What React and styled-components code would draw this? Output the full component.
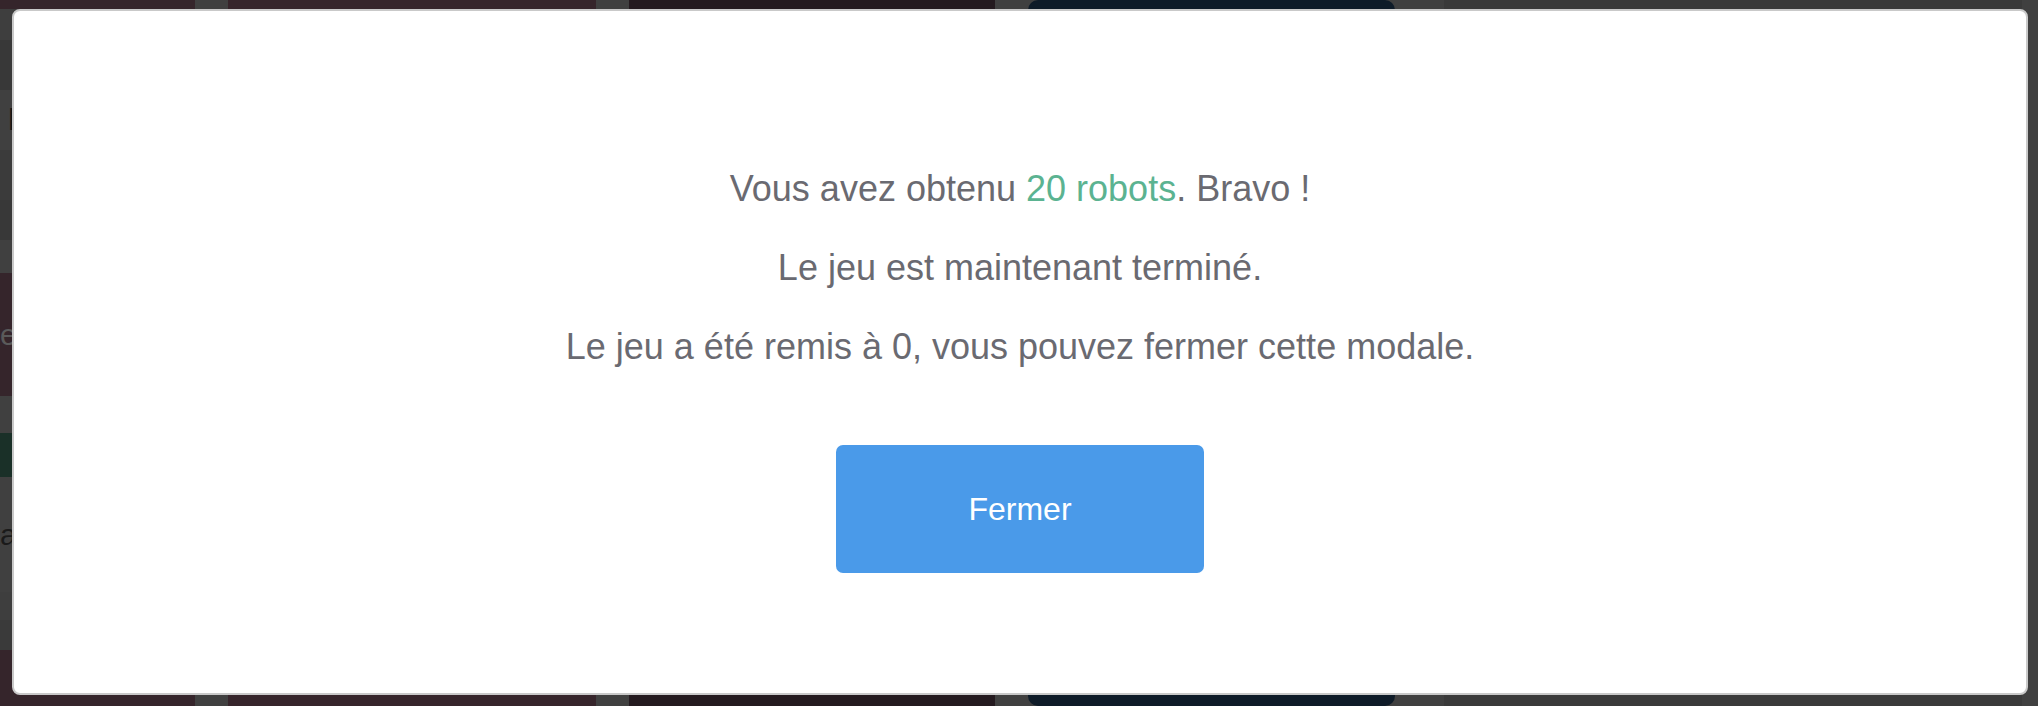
import React from 'react'
import styled, { createGlobalStyle } from 'styled-components'

const GlobalStyle = createGlobalStyle`
  html, body {
    margin: 0;
    padding: 0;
    height: 706px;
    overflow: hidden;
    background-color: #404040;
    font-family: "Liberation Sans", Arial, Helvetica, sans-serif;
  }
`

const Board = styled.div`
  display: grid;
  grid-template-columns: 195px 368px 366px 367px 594px;
  column-gap: 33px;
  height: 706px;
  width: 2038px;

  & > :last-child {
    margin-left: 16px;
  }
`

const Column = styled.div`
  display: flex;
  flex-direction: column;
  background-color: ${props => props.bg};
  border-radius: ${props => props.rounded ? '10px' : '0'};
  overflow: hidden;
`

const Band = styled.div`
  height: ${props => props.h}px;
  flex: ${props => props.grow ? 1 : 'none'};
  background-color: ${props => props.bg};
  color: ${props => props.ink || 'transparent'};
  font-size: 30px;
  line-height: ${props => props.h}px;
  text-align: right;
  padding-right: 180px;
`

const Panel = styled.div`
  display: flex;
  flex-direction: column;
  gap: 25px;
  padding-top: 12px;
  background-color: #3a3a3a;
`

const PanelCard = styled.div`
  height: 54px;
  background-color: ${props => props.bg};
`

const Overlay = styled.div`
  position: fixed;
  top: 9px;
  left: 12px;
  right: 10px;
  bottom: 11px;
  display: flex;
  flex-direction: column;
  align-items: center;
  padding: 156px 0 0;
  box-sizing: border-box;
  background-color: #fff;
  border: 2px solid #c9c9c9;
  border-radius: 8px;
`

const Message = styled.p`
  margin: 0 0 36px;
  font-size: 36px;
  line-height: 43px;
  color: #6a6a71;
  text-align: center;
`

const Highlight = styled.span`
  color: #5bb391;
`

const CloseButton = styled.button`
  margin-top: 41px;
  width: 368px;
  height: 128px;
  border: none;
  border-radius: 7px;
  background-color: #4a9ae9;
  color: #fff;
  font-family: inherit;
  font-size: 32px;
  cursor: pointer;
`

export default function App() {
  return (
    <>
      <GlobalStyle />
      <Board>
        <Column bg="#3a3a3a">
          <Band h={9} bg="#35252b" />
          <Band h={31} bg="#3e3e3e" />
          <Band h={50} bg="#383838" />
          <Band h={60} bg="#404040" ink="#151515">l</Band>
          <Band h={50} bg="#3b3b3b" />
          <Band h={40} bg="#383838" />
          <Band h={33} bg="#404040" />
          <Band h={123} bg="#35252b" ink="#5a5a5a">e</Band>
          <Band h={37} bg="#404040" />
          <Band h={44} bg="#1a3028" />
          <Band h={115} bg="#404040" ink="#1a1a1a">a</Band>
          <Band h={28} bg="#3e3e3e" />
          <Band h={30} bg="#3a3a3a" />
          <Band grow bg="#35252b" />
        </Column>
        <Column bg="#36252b" />
        <Column bg="#241a1f" />
        <Column bg="#0e1b28" rounded />
        <Panel>
          <PanelCard bg="#35252b" />
          <PanelCard bg="#13263a" />
        </Panel>
      </Board>
      <Overlay>
        <Message>
          Vous avez obtenu <Highlight>20 robots</Highlight>. Bravo !
        </Message>
        <Message>Le jeu est maintenant terminé.</Message>
        <Message>Le jeu a été remis à 0, vous pouvez fermer cette modale.</Message>
        <CloseButton>Fermer</CloseButton>
      </Overlay>
    </>
  )
}
